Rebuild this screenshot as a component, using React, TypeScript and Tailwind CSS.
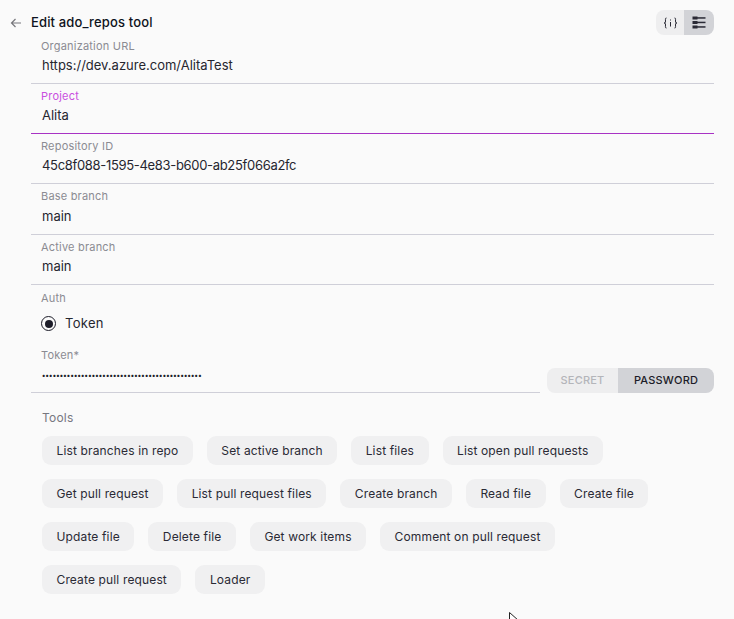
const FONT = "font-['Inter','Open_Sans',sans-serif]";

const TOOLS = [
  ['List branches in repo', 'Set active branch', 'List files', 'List open pull requests'],
  ['Get pull request', 'List pull request files', 'Create branch', 'Read file', 'Create file'],
  ['Update file', 'Delete file', 'Get work items', 'Comment on pull request'],
  ['Create pull request', 'Loader'],
];

function Field({ label, value, active, tight }: { label: string; value: string; active?: boolean; tight?: boolean }) {
  return (
    <div className={`h-[50.25px] pl-[10px] border-b ${active ? 'border-b-[#a832c4]' : 'border-b-[#cfcfd8]'}`}>
      <div className={`text-[11px] leading-[16px] pt-[4px] box-content tracking-[0.2px] ${active ? 'text-[#c94fe0]' : 'text-[#8b8b92]'}`}>{label}</div>
      <div className={`mt-[1.3px] pl-[1px] text-[13px] leading-[20px] text-[#26262f] ${tight ? 'tracking-[-0.32px]' : 'tracking-normal'}`}>{value}</div>
    </div>
  );
}

export default function App() {
  return (
    <div className={`${FONT} w-[734px] h-[619px] overflow-hidden bg-[#fafafa] relative`}>
      <div className="flex items-center justify-between pl-[10px] pr-[20px] pt-[12px] h-[33.6px]">
        <div className="flex items-center">
          <svg width="12" height="12" viewBox="0 0 12 12" fill="none" stroke="#77777c" strokeWidth="1.2">
            <path d="M11 6H1.5M5.5 2 1.5 6l4 4" />
          </svg>
          <span className="ml-[9px] text-[13px] font-medium text-[#0e1320] tracking-[0.15px]">Edit ado_repos tool</span>
        </div>
        <div className="flex h-[25px] rounded-[8px] overflow-hidden">
          <div className="w-[28px] bg-[#eeeeef] flex items-center justify-center">
            <svg width="15" height="12" viewBox="0 0 15 12" fill="none" stroke="#2a2a35" strokeWidth="1">
              <path d="M3.5 1C2 1 2.5 2 2.5 4S2 6 1 6c1 0 1.5 0 1.5 2s-.5 3 1 3" />
              <path d="M11.5 1c1.500 0 1 1 1 3s.5 2 1.500 2c-1 0-1.500 0-1.500 2s.5 3-1 3" />
              <path d="M7.500 2.500v1M7.500 5v4.500" />
            </svg>
          </div>
          <div className="w-[30px] bg-[#d2d3d7] flex items-center justify-center">
            <svg width="14" height="13" viewBox="0 0 14 13" fill="#2a2a35">
              <rect x="0.5" y="0.5" width="5" height="3" />
              <rect x="0.5" y="5" width="5" height="3" />
              <rect x="0.5" y="9.500" width="5" height="3" />
              <rect x="5" y="1.200" width="8.500" height="1.500" />
              <rect x="5" y="5.700" width="8.500" height="1.500" />
              <rect x="5" y="10.200" width="8.500" height="1.500" />
            </svg>
          </div>
        </div>
      </div>

      <div className="ml-[31px] mr-[20px]">
        <Field label="Organization URL" value="https://dev.azure.com/AlitaTest" />
        <Field label="Project" value="Alita" active />
        <Field label="Repository ID" value="45c8f088-1595-4e83-b600-ab25f066a2fc" tight />
        <Field label="Base branch" value="main" />
        <Field label="Active branch" value="main" />

        <div className="pl-[10px] pt-[5px]">
          <div className="text-[11px] leading-[16px] text-[#8b8b92] tracking-[0.2px]">Auth</div>
          <div className="flex items-center mt-[10px] h-[16px]">
            <span className="w-[15px] h-[15px] rounded-full border-[1.5px] border-[#1c1c28] flex items-center justify-center">
              <span className="w-[8px] h-[8px] rounded-full bg-[#1c1c28]" />
            </span>
            <span className="ml-[9px] text-[13px] text-[#26262f] tracking-[0.3px]">Token</span>
          </div>
        </div>

        <div className="flex items-end mt-[14.400px]">
          <div className="w-[509px] h-[47px] border-b border-b-[#cfcfd8] pl-[10px]">
            <div className="pt-[1px] text-[11px] leading-[16px] text-[#8b8b92] tracking-[0.2px]">Token*</div>
            <div className="mt-[5px] pl-[1px] text-[#1c1c28] text-[7px] leading-[16px] tracking-[0.23px] font-bold">
              {'•'.repeat(45)}
            </div>
          </div>
          <div className="ml-[7px] flex h-[25px] w-[167px] rounded-[8px] overflow-hidden text-[11px] font-medium tracking-[0.2px]">
            <div className="w-[71px] bg-[#eeeeef] text-[#b4b5ba] flex items-center justify-center">SECRET</div>
            <div className="flex-1 bg-[#d2d3d7] text-[#1c1c28] flex items-center justify-center">PASSWORD</div>
          </div>
        </div>

        <div className="pl-[11px]">
          <div className="mt-[17px] text-[12px] leading-[16px] text-[#77777f] tracking-[0.2px]">Tools</div>
          <div className="mt-[10px] flex flex-col gap-[14px]">
            {TOOLS.map((row) => (
              <div key={row[0]} className="flex gap-[14px]">
                {row.map((t) => (
                  <div key={t} className="h-[29px] px-[14.5px] rounded-[9px] bg-[#f0f0f1] flex items-center text-[12px] text-[#2a2a35] tracking-[0.14px]">
                    {t}
                  </div>
                ))}
              </div>
            ))}
          </div>
        </div>
      </div>

      <svg className="absolute left-[509px] top-[612px]" width="11" height="16" viewBox="0 0 11 16" fill="#fff" stroke="#222">
        <path d="M0.5 0.5V12l3-3 2 5 2-1-2-4.500h4z" />
      </svg>
    </div>
  );
}
